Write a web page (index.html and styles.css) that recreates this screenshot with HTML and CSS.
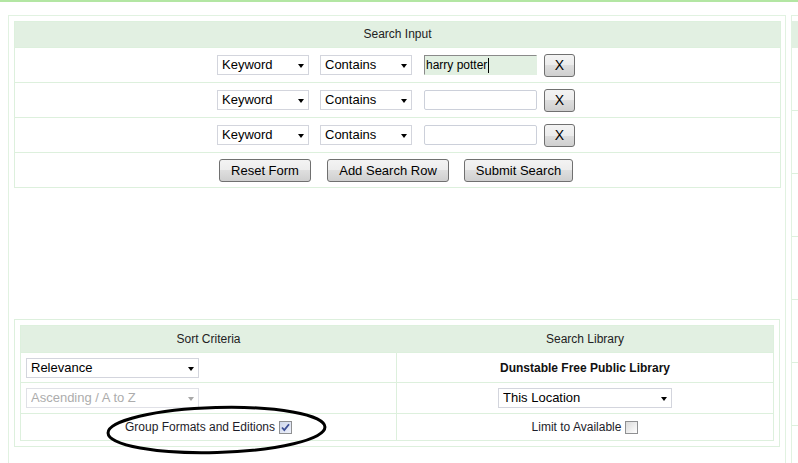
FILE: index.html
```html
<!DOCTYPE html>
<html lang="en">
<head>
<meta charset="utf-8">
<title>Advanced Search</title>
<link rel="stylesheet" href="styles.css">
</head>
<body>
<div class="topbar"></div>
<div class="page">
  <main class="panel">
    <section class="search">
      <div class="search-head">Search Input</div>
      <div class="search-row">
        <span class="sel f-field"><select><option>Keyword</option></select></span>
        <span class="sel f-op"><select><option>Contains</option></select></span>
        <span class="term-wrap"><input class="term term-active" type="text" value="harry potter"><span class="caret"></span></span>
        <button class="btn f-x" type="button">X</button>
      </div>
      <div class="search-row">
        <span class="sel f-field"><select><option>Keyword</option></select></span>
        <span class="sel f-op"><select><option>Contains</option></select></span>
        <span class="term-wrap"><input class="term" type="text" value=""></span>
        <button class="btn f-x" type="button">X</button>
      </div>
      <div class="search-row">
        <span class="sel f-field"><select><option>Keyword</option></select></span>
        <span class="sel f-op"><select><option>Contains</option></select></span>
        <span class="term-wrap"><input class="term" type="text" value=""></span>
        <button class="btn f-x" type="button">X</button>
      </div>
      <div class="search-row">
        <button class="btn btn-reset" type="button">Reset Form</button>
        <button class="btn btn-add" type="button">Add Search Row</button>
        <button class="btn btn-submit" type="button">Submit Search</button>
      </div>
    </section>

    <section class="sortbox">
      <div class="sort">
        <div class="cell head left">Sort Criteria</div>
        <div class="cell head">Search Library</div>

        <div class="cell r1 left start">
          <span class="sel wide"><select><option>Relevance</option></select></span>
        </div>
        <div class="cell r1"><b class="lib">Dunstable Free Public Library</b></div>

        <div class="cell r2 left start">
          <span class="sel wide disabled"><select disabled><option>Ascending / A to Z</option></select></span>
        </div>
        <div class="cell r2">
          <span class="sel loc"><select><option>This Location</option></select></span>
        </div>

        <div class="cell r3 left">
          <label class="chk">Group Formats and Editions <span class="cb checked"><svg viewBox="0 0 11 11" width="11" height="11"><path d="M2 5.5 L4.3 8 L9 2.2" fill="none" stroke="#3d4f96" stroke-width="1.8"/></svg></span></label>
        </div>
        <div class="cell r3">
          <label class="chk">Limit to Available <span class="cb"></span></label>
        </div>
      </div>
    </section>

    <svg class="annot" width="240" height="80" viewBox="0 0 240 80">
      <ellipse cx="117.5" cy="34" rx="108.5" ry="22.5" fill="none" stroke="#000" stroke-width="3" transform="rotate(-1.6 117.5 34)"/>
    </svg>
  </main>

  <aside class="side">
    <div class="side-head"></div>
    <div class="side-row"></div>
    <div class="side-row"></div>
    <div class="side-row"></div>
    <div class="side-row"></div>
    <div class="side-row"></div>
    <div class="side-row"></div>
  </aside>
</div>
</body>
</html>
```

FILE: styles.css
```css
* { box-sizing: border-box; }
html, body { margin: 0; padding: 0; }
body {
  width: 798px;
  height: 463px;
  overflow: hidden;
  background: #fff;
  color: #222;
  font-family: "Liberation Sans", Arial, sans-serif;
  font-size: 12px;
}

.topbar { height: 2px; background: #b3e6a3; }

.page {
  display: flex;
  gap: 5px;
  width: 798px;
  height: 461px;
  overflow: hidden;
  padding: 13px 0 0 8px;
}

.panel {
  position: relative;
  flex: 0 0 778px;
  height: 460px;
  border: 1px solid #e1f2e1;
  padding: 5px 4px 0 5px;
  overflow: hidden;
}

/* search input table */
.search {
  width: 767px;
  border: 1px solid #ddf0dd;
}
.search-head {
  height: 25px;
  line-height: 25px;
  text-align: center;
  background: #e2f0e2;
}
.search-row {
  height: 35px;
  border-top: 1px solid #ddf0dd;
  display: flex;
  justify-content: center;
  align-items: center;
  padding-right: 3px;
}

/* selects */
.sel {
  position: relative;
  display: inline-block;
  height: 20px;
}
.sel select {
  appearance: none;
  -webkit-appearance: none;
  width: 100%;
  height: 20px;
  margin: 0;
  padding: 0 14px 0 4px;
  border: 1px solid #d3d5dd;
  border-radius: 0;
  background: #fff;
  color: #000;
  font-family: "Liberation Sans", Arial, sans-serif;
  font-size: 13px;
  line-height: 18px;
}
.sel::after {
  content: "";
  position: absolute;
  right: 5px;
  top: 9px;
  border-left: 3.5px solid transparent;
  border-right: 3.5px solid transparent;
  border-top: 4px solid #000;
}
.sel.disabled select { color: #8a8a8a; border-color: #d3d5dd; }
.sel.disabled::after { border-top-color: #a8a8a8; }

.f-field { width: 92px; }
.f-op { width: 92px; margin-left: 11px; }

.term-wrap {
  position: relative;
  display: inline-block;
  margin-left: 12px;
  height: 20px;
}
.term {
  display: block;
  width: 113px;
  height: 20px;
  margin: 0;
  padding: 0 1px;
  border: 1px solid #ccd0da;
  border-radius: 2px;
  background: #fff;
  color: #000;
  font-family: "Liberation Sans", Arial, sans-serif;
  font-size: 12px;
}
.term-active {
  background: #e2f0e2;
  border-radius: 0;
  border-color: #8a8a8a #e2f0e2 #e2f0e2 #8a8a8a;
}
.caret {
  position: absolute;
  left: 64px;
  top: 3px;
  width: 1px;
  height: 15px;
  background: #000;
}

/* buttons */
.btn {
  height: 23px;
  margin: 0;
  padding: 0;
  border: 1px solid #707070;
  border-radius: 3px;
  background: linear-gradient(#f3f3f3 0%, #ececec 50%, #dedede 50%, #cfcfcf 100%);
  color: #000;
  font-family: "Liberation Sans", Arial, sans-serif;
  font-size: 13px;
}
.f-x { width: 31px; margin-left: 7px; font-size: 14px; }
.btn-reset { width: 92px; }
.btn-add { width: 122px; margin-left: 16px; }
.btn-submit { width: 109px; margin-left: 15px; }

/* sort / library box */
.sortbox {
  width: 766px;
  margin-top: 131px;
  border: 1px solid #ddf0dd;
  padding: 5px;
}
.sort {
  display: grid;
  grid-template-columns: 376px 1fr;
  border: 1px solid #ddf0dd;
}
.cell {
  display: flex;
  align-items: center;
  justify-content: center;
  border-bottom: 1px solid #ddf0dd;
}
.cell.left { border-right: 1px solid #ddf0dd; }
.cell.start { justify-content: flex-start; padding-left: 5px; }
.cell.head { height: 27px; background: #e2f0e2; }
.cell.head.left { border-right-color: #e2f0e2; }
.cell.r1 { height: 30px; }
.cell.r2 { height: 31px; }
.cell.r3 { height: 26px; border-bottom: 0; }

.wide { width: 173px; }
.loc { width: 174px; }
.lib { font-weight: bold; color: #111; }

.chk {
  display: inline-flex;
  align-items: center;
  gap: 4px;
  color: #1d1d2a;
}
.cb {
  display: inline-block;
  width: 13px;
  height: 13px;
  border: 1px solid #8f9092;
  background: linear-gradient(135deg, #dadada, #ffffff);
}
.cb.checked {
  background: linear-gradient(135deg, #cfd7ec, #eef1fa);
}
.cb svg { display: block; }

/* annotation drawn over the content */
.annot {
  position: absolute;
  left: 90px;
  top: 380px;
  pointer-events: none;
}

/* right column sliver */
.side {
  flex: 1 1 0;
  min-width: 0;
  height: 460px;
  border-left: 1px solid #e1f2e1;
  border-top: 1px solid #e1f2e1;
  padding-top: 5px;
  overflow: hidden;
}
.side-head { height: 27px; background: #e2f0e2; }
.side-row { height: 63px; border-bottom: 1px solid #ddf0dd; }
```
